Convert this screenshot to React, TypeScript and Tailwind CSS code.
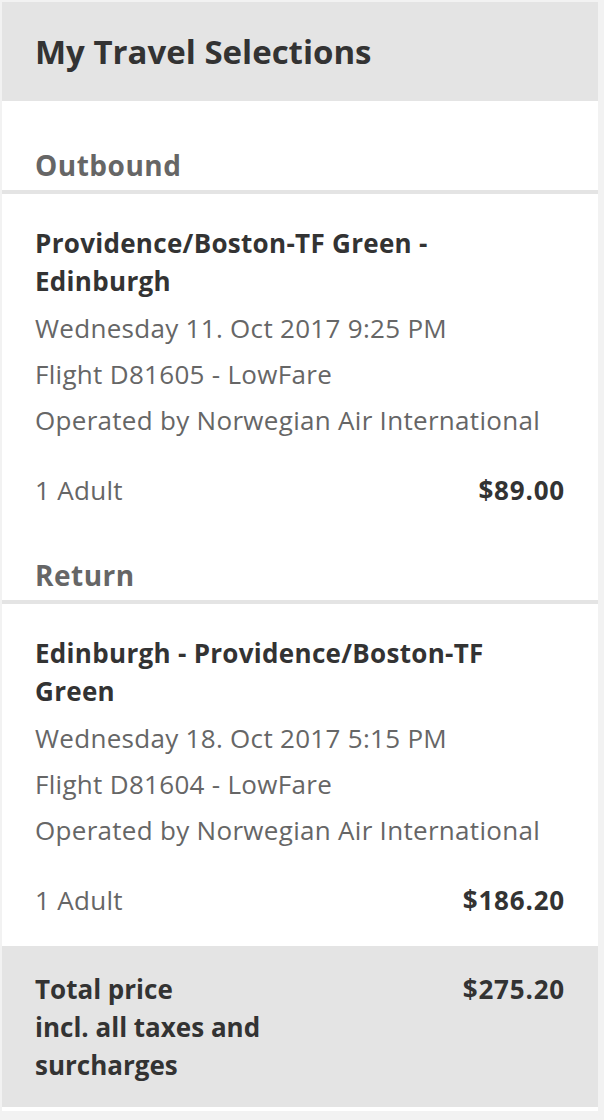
const font = { fontFamily: "'Open Sans', 'Noto Sans', sans-serif" };

type Leg = {
  label: string;
  route: string;
  date: string;
  flight: string;
  operator: string;
  passengers: string;
  price: string;
};

const legs: Leg[] = [
  {
    label: "Outbound",
    route: "Providence/Boston-TF Green - Edinburgh",
    date: "Wednesday 11. Oct 2017 9:25 PM",
    flight: "Flight D81605 - LowFare",
    operator: "Operated by Norwegian Air International",
    passengers: "1 Adult",
    price: "$89.00",
  },
  {
    label: "Return",
    route: "Edinburgh - Providence/Boston-TF Green",
    date: "Wednesday 18. Oct 2017 5:15 PM",
    flight: "Flight D81604 - LowFare",
    operator: "Operated by Norwegian Air International",
    passengers: "1 Adult",
    price: "$186.20",
  },
];

function LegBlock({ leg, first }: { leg: Leg; first: boolean }) {
  return (
    <div>
      {/* Section heading */}
      <div
        className={`px-[33px] pb-[5px] text-[28px] leading-[40px] font-bold tracking-[0.5px] text-[#666] ${
          first ? "pt-[44px]" : "pt-[42px]"
        }`}
      >
        {leg.label}
      </div>
      <div className="h-[4px] bg-[#e4e4e4]" />

      <div className="px-[33px] pt-[30px] text-[26px] tracking-[0.3px]">
        <div className="pr-[30px] leading-[38px] font-bold text-[#333]">{leg.route}</div>
        <div className="mt-[5px] leading-[46px] text-[#666]">
          <div>{leg.date}</div>
          <div>{leg.flight}</div>
          <div>{leg.operator}</div>
        </div>
        <div className="mt-[24px] flex items-center justify-between leading-[46px]">
          <span className="text-[#666]">{leg.passengers}</span>
          <span className="font-bold tracking-[0.8px] text-[#333]">{leg.price}</span>
        </div>
      </div>
    </div>
  );
}

export default function App() {
  return (
    <div className="min-h-[1120px] bg-[#f2f2f2] pt-[2px] pl-[2px] pr-[6px]" style={font}>
      <div className="bg-white">
        {/* Header */}
        <div className="h-[99px] flex items-center px-[33px] bg-[#e4e4e4]">
          <h1 className="text-[33px] font-bold text-[#333]">My Travel Selections</h1>
        </div>

        {legs.map((leg, i) => (
          <LegBlock key={leg.label} leg={leg} first={i === 0} />
        ))}

        {/* Total */}
        <div className="mt-[23px] bg-[#e4e4e4] px-[33px] pt-[24px] pb-[23px] flex justify-between text-[26px] leading-[38px] font-bold text-[#333]">
          <div>
            Total price
            <br />
            incl. all taxes and
            <br />
            surcharges
          </div>
          <div className="tracking-[0.8px]">$275.20</div>
        </div>
        <div className="h-[4px] bg-white" />
      </div>
    </div>
  );
}
